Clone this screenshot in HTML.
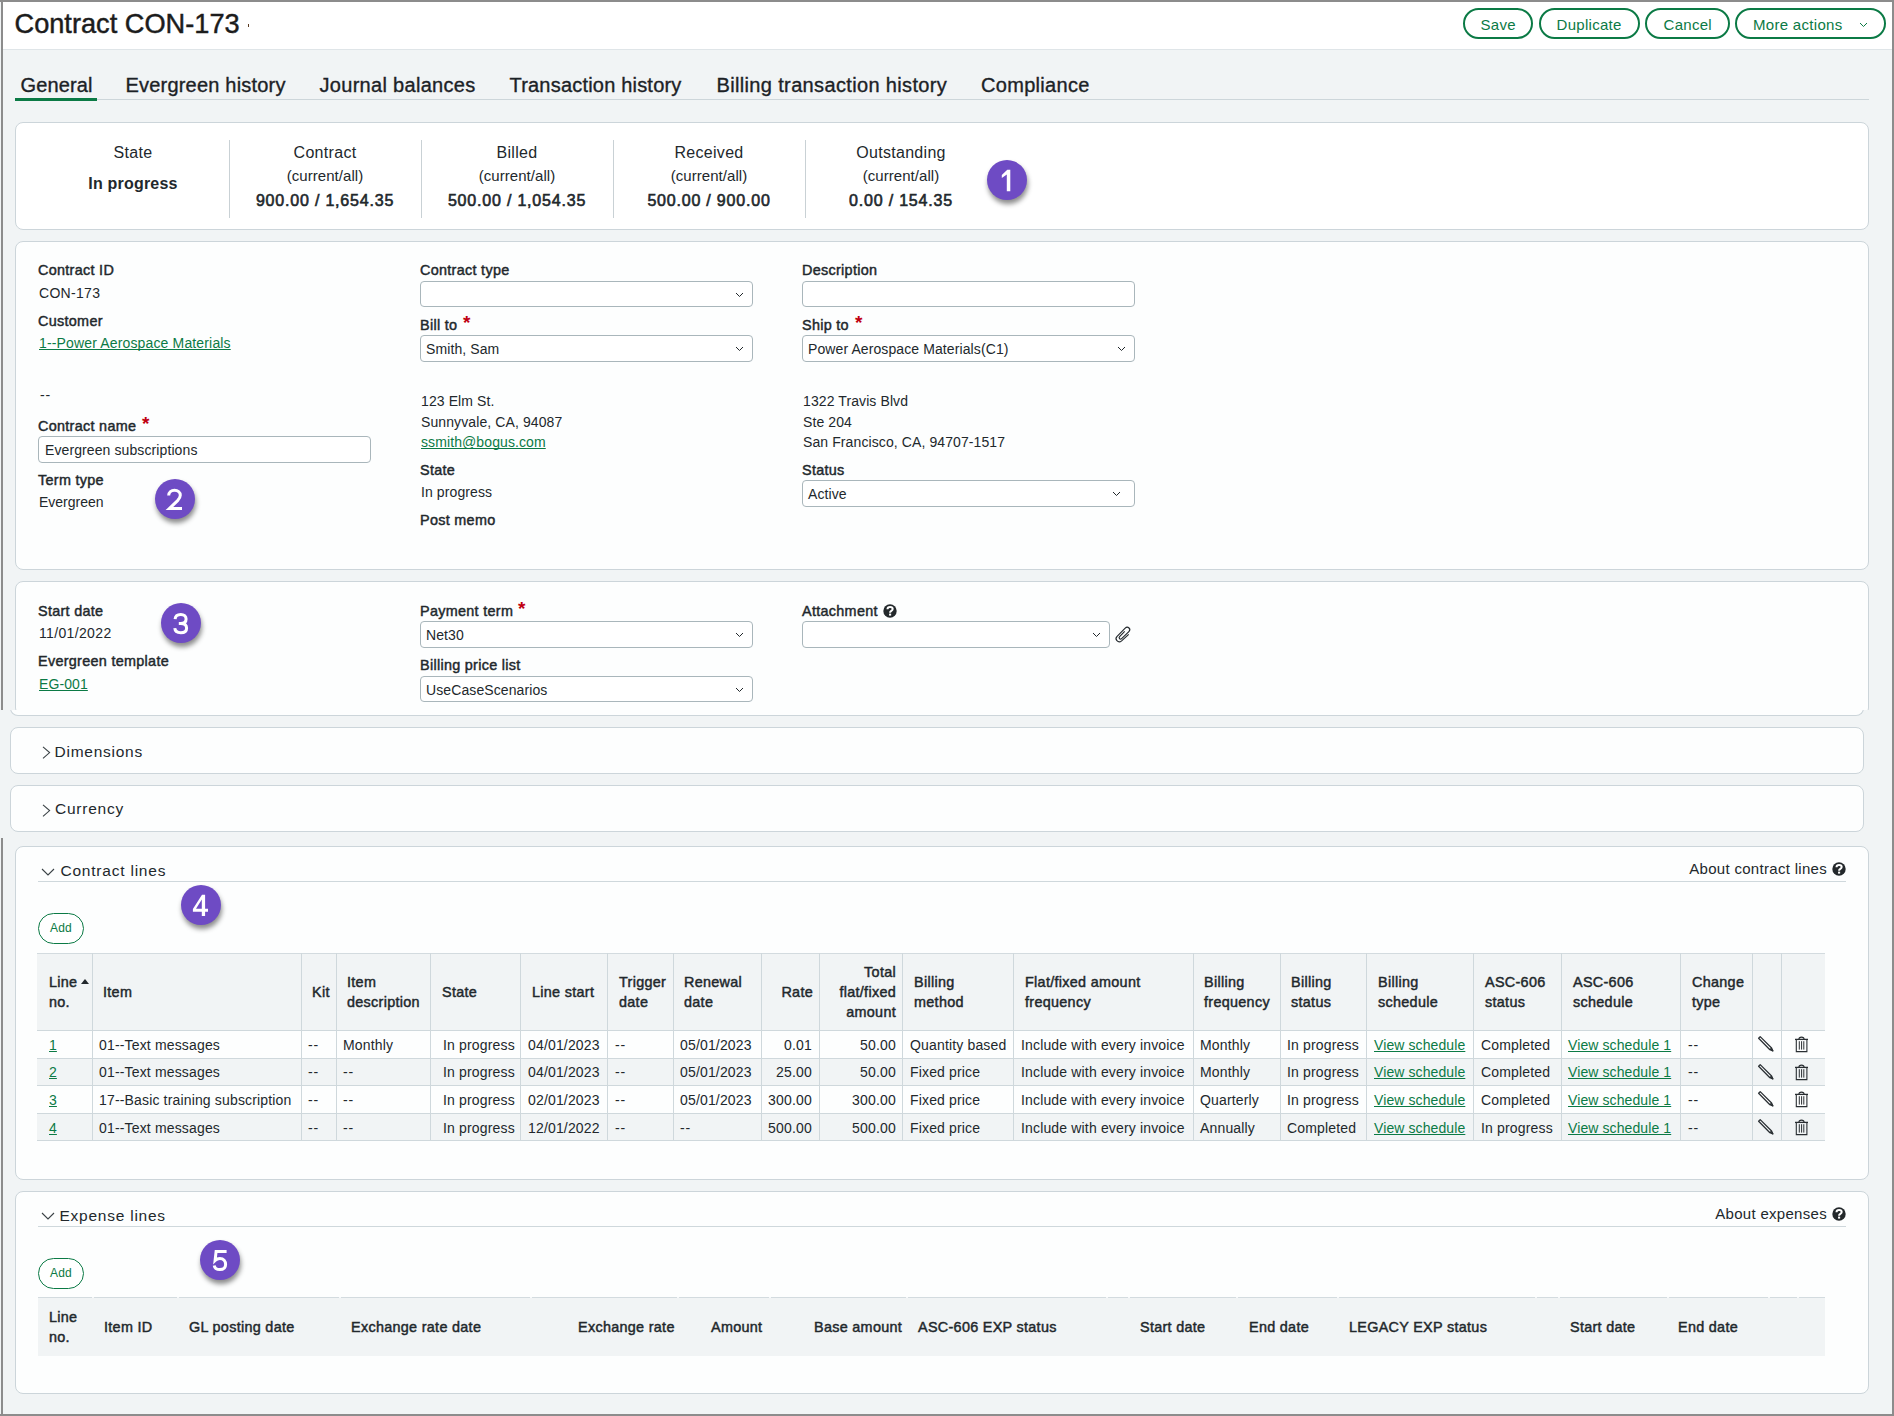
<!DOCTYPE html><html><head><meta charset="utf-8"><style>
html,body{margin:0;padding:0;}
body{width:1894px;height:1416px;position:relative;overflow:hidden;background:#f1f4f5;font-family:"Liberation Sans",sans-serif;color:#22282c;}
.t{position:absolute;white-space:nowrap;}
.b{position:absolute;}
.b svg{display:block;}
.circ{position:absolute;width:40px;height:40px;border-radius:50%;background:#6e4bc4;box-shadow:1px 4px 5px rgba(0,0,0,0.45);}
.circ svg{display:block;}
.btn{position:absolute;box-sizing:border-box;border:2px solid #0b7a45;border-radius:16px;color:#0b7a45;font-size:16px;background:#fff;}
</style></head><body>
<div class="b" style="left:0px;top:0px;width:1894px;height:2px;background:#8c8c8c"></div>
<div class="b" style="left:1px;top:0px;width:2px;height:710px;background:#8c8c8c"></div>
<div class="b" style="left:1px;top:838px;width:2px;height:578px;background:#8c8c8c"></div>
<div class="b" style="left:1892px;top:0px;width:2px;height:1416px;background:#8c8c8c"></div>
<div class="b" style="left:0px;top:1414px;width:1894px;height:2px;background:#8c8c8c"></div>
<div class="b" style="left:3px;top:2px;width:1889px;height:47px;background:#fff"></div>
<div class="b" style="left:3px;top:49px;width:1889px;height:1px;background:#dfe5e8"></div>
<div class="t " style="left:14.5px;top:10.38px;font-size:27.2px;line-height:27.2px;color:#1c1c1c;-webkit-text-stroke:0.45px #1c1c1c;">Contract CON-173</div>
<div class="b" style="left:248px;top:24px;width:1px;height:3px;background:#5a3a20"></div>
<div class="btn" style="left:1463px;top:8px;width:70px;height:31px;"></div>
<div class="t " style="left:1480.5px;top:17.30px;font-size:15px;line-height:15px;color:#0b7a45;letter-spacing:0.3px;">Save</div>
<div class="btn" style="left:1539px;top:8px;width:101px;height:31px;"></div>
<div class="t " style="left:1556.5px;top:17.30px;font-size:15px;line-height:15px;color:#0b7a45;letter-spacing:0.3px;">Duplicate</div>
<div class="btn" style="left:1645px;top:8px;width:85px;height:31px;"></div>
<div class="t " style="left:1663.5px;top:17.30px;font-size:15px;line-height:15px;color:#0b7a45;letter-spacing:0.3px;">Cancel</div>
<div class="btn" style="left:1735px;top:8px;width:151px;height:31px;"></div>
<div class="t " style="left:1753px;top:17.30px;font-size:15px;line-height:15px;color:#0b7a45;letter-spacing:0.3px;">More actions</div>
<div class="b" style="left:1859px;top:21.5px;width:9px;height:6px"><svg width="9" height="6" viewBox="0 0 9 6"><path d="M1 1 L4.5 4.5 L8 1" fill="none" stroke="#0b7a45" stroke-width="1"/></svg></div>
<div class="b" style="left:15px;top:99px;width:1854px;height:1px;background:#cdd6da"></div>
<div class="b" style="left:15px;top:98px;width:82px;height:3px;background:#0b7a45"></div>
<div class="t " style="left:20.5px;top:74.67px;font-size:20px;line-height:20px;color:#1c2226;letter-spacing:0.15px;-webkit-text-stroke:0.35px #1c2226;">General</div>
<div class="t " style="left:125.5px;top:74.67px;font-size:20px;line-height:20px;color:#1c2226;letter-spacing:0.2px;-webkit-text-stroke:0.35px #1c2226;">Evergreen history</div>
<div class="t " style="left:319.5px;top:74.67px;font-size:20px;line-height:20px;color:#1c2226;letter-spacing:0.3px;-webkit-text-stroke:0.35px #1c2226;">Journal balances</div>
<div class="t " style="left:509.5px;top:74.67px;font-size:20px;line-height:20px;color:#1c2226;letter-spacing:0.2px;-webkit-text-stroke:0.35px #1c2226;">Transaction history</div>
<div class="t " style="left:716.5px;top:74.67px;font-size:20px;line-height:20px;color:#1c2226;letter-spacing:0.35px;-webkit-text-stroke:0.35px #1c2226;">Billing transaction history</div>
<div class="t " style="left:981px;top:74.67px;font-size:20px;line-height:20px;color:#1c2226;letter-spacing:0.3px;-webkit-text-stroke:0.35px #1c2226;">Compliance</div>
<div class="b" style="left:15px;top:122px;width:1854px;height:108px;border:1px solid #ccd5da;border-radius:8px;background:#fff;box-sizing:border-box;"></div>
<div class="b" style="left:229px;top:140px;width:1px;height:78px;background:#c9d1d5"></div>
<div class="b" style="left:421px;top:140px;width:1px;height:78px;background:#c9d1d5"></div>
<div class="b" style="left:613px;top:140px;width:1px;height:78px;background:#c9d1d5"></div>
<div class="b" style="left:805px;top:140px;width:1px;height:78px;background:#c9d1d5"></div>
<div class="t " style="left:-167px;width:600px;text-align:center;top:145.46px;font-size:16px;line-height:16px;letter-spacing:0.3px;">State</div>
<div class="t " style="left:-167px;width:600px;text-align:center;top:176.46px;font-size:16px;line-height:16px;font-weight:bold;letter-spacing:0.2px;">In progress</div>
<div class="t " style="left:25px;width:600px;text-align:center;top:145.46px;font-size:16px;line-height:16px;letter-spacing:0.3px;">Contract</div>
<div class="t " style="left:25px;width:600px;text-align:center;top:168.30px;font-size:15px;line-height:15px;letter-spacing:0.05px;">(current/all)</div>
<div class="t " style="left:25px;width:600px;text-align:center;top:192.96px;font-size:16px;line-height:16px;letter-spacing:0.8px;-webkit-text-stroke:0.6px currentColor;">900.00 / 1,654.35</div>
<div class="t " style="left:217px;width:600px;text-align:center;top:145.46px;font-size:16px;line-height:16px;letter-spacing:0.3px;">Billed</div>
<div class="t " style="left:217px;width:600px;text-align:center;top:168.30px;font-size:15px;line-height:15px;letter-spacing:0.05px;">(current/all)</div>
<div class="t " style="left:217px;width:600px;text-align:center;top:192.96px;font-size:16px;line-height:16px;letter-spacing:0.8px;-webkit-text-stroke:0.6px currentColor;">500.00 / 1,054.35</div>
<div class="t " style="left:409px;width:600px;text-align:center;top:145.46px;font-size:16px;line-height:16px;letter-spacing:0.3px;">Received</div>
<div class="t " style="left:409px;width:600px;text-align:center;top:168.30px;font-size:15px;line-height:15px;letter-spacing:0.05px;">(current/all)</div>
<div class="t " style="left:409px;width:600px;text-align:center;top:192.96px;font-size:16px;line-height:16px;letter-spacing:0.8px;-webkit-text-stroke:0.6px currentColor;">500.00 / 900.00</div>
<div class="t " style="left:601px;width:600px;text-align:center;top:145.46px;font-size:16px;line-height:16px;letter-spacing:0.3px;">Outstanding</div>
<div class="t " style="left:601px;width:600px;text-align:center;top:168.30px;font-size:15px;line-height:15px;letter-spacing:0.05px;">(current/all)</div>
<div class="t " style="left:601px;width:600px;text-align:center;top:192.96px;font-size:16px;line-height:16px;letter-spacing:0.8px;-webkit-text-stroke:0.6px currentColor;">0.00 / 154.35</div>
<div class="circ" style="left:987px;top:160px;"><svg width="40" height="40" viewBox="0 0 40 40"><path d="M19.8 31.2 V14.6 L14.8 17.9 V15.0 L20.3 9.8 H23.3 V31.2 Z" fill="#fff"/></svg></div>
<div class="b" style="left:15px;top:241px;width:1854px;height:329px;border:1px solid #ccd5da;border-radius:8px;background:#fdfefe;box-sizing:border-box;"></div>
<div class="t " style="left:38px;top:263.15px;font-size:14.4px;line-height:14px;letter-spacing:0.3px;-webkit-text-stroke:0.45px currentColor;">Contract ID</div>
<div class="t " style="left:39px;top:286.15px;font-size:14px;line-height:14px;letter-spacing:0.3px;">CON-173</div>
<div class="t " style="left:38px;top:313.65px;font-size:14.4px;line-height:14px;letter-spacing:0.3px;-webkit-text-stroke:0.45px currentColor;">Customer</div>
<div class="t " style="left:39px;top:336.15px;font-size:14px;line-height:14px;color:#0b7a45;letter-spacing:0.15px;text-decoration:underline;text-underline-offset:1px;text-decoration-skip-ink:none;">1--Power Aerospace Materials</div>
<div class="t " style="left:40px;top:388.15px;font-size:14px;line-height:14px;letter-spacing:0.8px;">--</div>
<div class="t " style="left:38px;top:419.15px;font-size:14.4px;line-height:14px;letter-spacing:0.3px;-webkit-text-stroke:0.45px currentColor;">Contract name</div>
<div class="t" style="left:142px;top:414px;font-size:19px;line-height:19px;color:#c00010;font-weight:bold">*</div>
<div class="b" style="left:38px;top:436px;width:333px;height:27px;border:1px solid #a9b6bb;border-radius:4px;background:#fff;box-sizing:border-box;"></div>
<div class="t " style="left:45px;top:443.15px;font-size:14px;line-height:14px;letter-spacing:0.1px;">Evergreen subscriptions</div>
<div class="t " style="left:38px;top:473.15px;font-size:14.4px;line-height:14px;letter-spacing:0.3px;-webkit-text-stroke:0.45px currentColor;">Term type</div>
<div class="t " style="left:39px;top:495.15px;font-size:14px;line-height:14px;">Evergreen</div>
<div class="circ" style="left:155px;top:479px;"><svg width="40" height="40" viewBox="0 0 40 40"><path d="M13.7 16.6 C13.7 12.9 16.3 11.3 19.5 11.3 C22.8 11.3 25.3 13.3 25.3 16.3 C25.3 18.5 24.2 19.9 22.6 21.6 L14.3 29.6 H27" fill="none" stroke="#fff" stroke-width="3"/></svg></div>
<div class="t " style="left:420px;top:263.15px;font-size:14.4px;line-height:14px;letter-spacing:0.3px;-webkit-text-stroke:0.45px currentColor;">Contract type</div>
<div class="b" style="left:420px;top:281px;width:333px;height:26px;border:1px solid #a9b6bb;border-radius:4px;background:#fff;box-sizing:border-box;"></div>
<div class="b" style="left:735px;top:291.5px;width:9px;height:6px"><svg width="9" height="6" viewBox="0 0 9 6"><path d="M1 1 L4.5 4.5 L8 1" fill="none" stroke="#22282c" stroke-width="1"/></svg></div>
<div class="t " style="left:420px;top:318.15px;font-size:14.4px;line-height:14px;letter-spacing:0.3px;-webkit-text-stroke:0.45px currentColor;">Bill to</div>
<div class="t" style="left:463px;top:313px;font-size:19px;line-height:19px;color:#c00010;font-weight:bold">*</div>
<div class="b" style="left:420px;top:335px;width:333px;height:27px;border:1px solid #a9b6bb;border-radius:4px;background:#fff;box-sizing:border-box;"></div>
<div class="b" style="left:735px;top:346.0px;width:9px;height:6px"><svg width="9" height="6" viewBox="0 0 9 6"><path d="M1 1 L4.5 4.5 L8 1" fill="none" stroke="#22282c" stroke-width="1"/></svg></div>
<div class="t " style="left:426px;top:342.15px;font-size:14px;line-height:14px;letter-spacing:0.1px;">Smith, Sam</div>
<div class="t " style="left:421px;top:393.65px;font-size:14px;line-height:14px;letter-spacing:0.1px;">123 Elm St.</div>
<div class="t " style="left:421px;top:415.15px;font-size:14px;line-height:14px;letter-spacing:0.1px;">Sunnyvale, CA, 94087</div>
<div class="t " style="left:421px;top:434.65px;font-size:14px;line-height:14px;color:#0b7a45;letter-spacing:0.1px;text-decoration:underline;text-underline-offset:1px;text-decoration-skip-ink:none;">ssmith@bogus.com</div>
<div class="t " style="left:420px;top:462.65px;font-size:14.4px;line-height:14px;letter-spacing:0.3px;-webkit-text-stroke:0.45px currentColor;">State</div>
<div class="t " style="left:421px;top:485.15px;font-size:14px;line-height:14px;letter-spacing:0.1px;">In progress</div>
<div class="t " style="left:420px;top:513.15px;font-size:14.4px;line-height:14px;letter-spacing:0.3px;-webkit-text-stroke:0.45px currentColor;">Post memo</div>
<div class="t " style="left:802px;top:263.15px;font-size:14.4px;line-height:14px;letter-spacing:0.3px;-webkit-text-stroke:0.45px currentColor;">Description</div>
<div class="b" style="left:802px;top:281px;width:333px;height:26px;border:1px solid #a9b6bb;border-radius:4px;background:#fff;box-sizing:border-box;"></div>
<div class="t " style="left:802px;top:318.15px;font-size:14.4px;line-height:14px;letter-spacing:0.3px;-webkit-text-stroke:0.45px currentColor;">Ship to</div>
<div class="t" style="left:855px;top:313px;font-size:19px;line-height:19px;color:#c00010;font-weight:bold">*</div>
<div class="b" style="left:802px;top:335px;width:333px;height:27px;border:1px solid #a9b6bb;border-radius:4px;background:#fff;box-sizing:border-box;"></div>
<div class="b" style="left:1117px;top:346.0px;width:9px;height:6px"><svg width="9" height="6" viewBox="0 0 9 6"><path d="M1 1 L4.5 4.5 L8 1" fill="none" stroke="#22282c" stroke-width="1"/></svg></div>
<div class="t " style="left:808px;top:342.15px;font-size:14px;line-height:14px;letter-spacing:0.1px;">Power Aerospace Materials(C1)</div>
<div class="t " style="left:803px;top:393.65px;font-size:14px;line-height:14px;letter-spacing:0.1px;">1322 Travis Blvd</div>
<div class="t " style="left:803px;top:415.15px;font-size:14px;line-height:14px;letter-spacing:0.1px;">Ste 204</div>
<div class="t " style="left:803px;top:434.65px;font-size:14px;line-height:14px;letter-spacing:0.1px;">San Francisco, CA, 94707-1517</div>
<div class="t " style="left:802px;top:462.65px;font-size:14.4px;line-height:14px;letter-spacing:0.3px;-webkit-text-stroke:0.45px currentColor;">Status</div>
<div class="b" style="left:802px;top:480px;width:333px;height:27px;border:1px solid #a9b6bb;border-radius:4px;background:#fff;box-sizing:border-box;"></div>
<div class="b" style="left:1112px;top:491.0px;width:9px;height:6px"><svg width="9" height="6" viewBox="0 0 9 6"><path d="M1 1 L4.5 4.5 L8 1" fill="none" stroke="#22282c" stroke-width="1"/></svg></div>
<div class="t " style="left:808px;top:487.15px;font-size:14px;line-height:14px;letter-spacing:0.1px;">Active</div>
<div class="b" style="left:15px;top:581px;width:1854px;height:135px;border:1px solid #ccd5da;border-radius:8px;background:#fdfefe;box-sizing:border-box;"></div>
<div class="t " style="left:38px;top:604.15px;font-size:14.4px;line-height:14px;letter-spacing:0.3px;-webkit-text-stroke:0.45px currentColor;">Start date</div>
<div class="t " style="left:39px;top:626.15px;font-size:14px;line-height:14px;letter-spacing:0.35px;">11/01/2022</div>
<div class="t " style="left:38px;top:654.15px;font-size:14.4px;line-height:14px;letter-spacing:0.3px;-webkit-text-stroke:0.45px currentColor;">Evergreen template</div>
<div class="t " style="left:39px;top:677.15px;font-size:14px;line-height:14px;color:#0b7a45;letter-spacing:0.1px;text-decoration:underline;text-underline-offset:1px;text-decoration-skip-ink:none;">EG-001</div>
<div class="circ" style="left:161px;top:603px;"><svg width="40" height="40" viewBox="0 0 40 40"><path d="M14.1 16.2 C14.3 13 16.6 11.5 19.8 11.5 C23 11.5 25.1 13.3 25.1 16 C25.1 18.8 23 20.5 19.7 20.5 H17.8 M19.7 20.5 C23.3 20.5 25.6 22.3 25.6 25.2 C25.6 28.2 23.2 29.7 19.8 29.7 C16.5 29.7 14 28.2 13.8 25.2" fill="none" stroke="#fff" stroke-width="3"/></svg></div>
<div class="t " style="left:420px;top:604.15px;font-size:14.4px;line-height:14px;letter-spacing:0.3px;-webkit-text-stroke:0.45px currentColor;">Payment term</div>
<div class="t" style="left:518px;top:599px;font-size:19px;line-height:19px;color:#c00010;font-weight:bold">*</div>
<div class="b" style="left:420px;top:621px;width:333px;height:27px;border:1px solid #a9b6bb;border-radius:4px;background:#fff;box-sizing:border-box;"></div>
<div class="b" style="left:735px;top:632.0px;width:9px;height:6px"><svg width="9" height="6" viewBox="0 0 9 6"><path d="M1 1 L4.5 4.5 L8 1" fill="none" stroke="#22282c" stroke-width="1"/></svg></div>
<div class="t " style="left:426px;top:628.15px;font-size:14px;line-height:14px;letter-spacing:0.1px;">Net30</div>
<div class="t " style="left:420px;top:658.15px;font-size:14.4px;line-height:14px;letter-spacing:0.3px;-webkit-text-stroke:0.45px currentColor;">Billing price list</div>
<div class="b" style="left:420px;top:676px;width:333px;height:26px;border:1px solid #a9b6bb;border-radius:4px;background:#fff;box-sizing:border-box;"></div>
<div class="b" style="left:735px;top:686.5px;width:9px;height:6px"><svg width="9" height="6" viewBox="0 0 9 6"><path d="M1 1 L4.5 4.5 L8 1" fill="none" stroke="#22282c" stroke-width="1"/></svg></div>
<div class="t " style="left:426px;top:683.15px;font-size:14px;line-height:14px;letter-spacing:0.1px;">UseCaseScenarios</div>
<div class="t " style="left:802px;top:604.15px;font-size:14.4px;line-height:14px;letter-spacing:0.3px;-webkit-text-stroke:0.45px currentColor;">Attachment</div>
<div class="b" style="left:883px;top:604px;width:14px;height:14px"><svg width="14" height="14" viewBox="0 0 14 14"><circle cx="7" cy="7" r="6.7" fill="#23282b"/><path d="M4.5 5.3 C4.5 3.8 5.6 3 7.1 3 C8.6 3 9.7 3.8 9.7 5.1 C9.7 6.3 8.7 6.8 8 7.2 C7.4 7.6 7.1 7.9 7.1 8.7" stroke="#fff" stroke-width="2" fill="none"/><rect x="6.05" y="9.6" width="2.1" height="2" fill="#fff"/></svg></div>
<div class="b" style="left:802px;top:621px;width:308px;height:27px;border:1px solid #a9b6bb;border-radius:4px;background:#fff;box-sizing:border-box;"></div>
<div class="b" style="left:1092px;top:632.0px;width:9px;height:6px"><svg width="9" height="6" viewBox="0 0 9 6"><path d="M1 1 L4.5 4.5 L8 1" fill="none" stroke="#22282c" stroke-width="1"/></svg></div>
<div class="b" style="left:1113px;top:624px;width:20px;height:20px"><svg width="20" height="20" viewBox="0 0 20 20"><path d="M15.7 10.4 L8.6 16.9 C7.2 18.1 5.1 18 3.9 16.7 C2.8 15.5 2.9 13.6 4.1 12.4 L12.2 4.1 C13.3 3 15 3 16 4 C17 5 16.9 6.6 15.9 7.6 L8.6 14.6 C8 15.2 7 15.2 6.5 14.6 C6 14 6.1 13.1 6.6 12.6 L11.7 7.4" fill="none" stroke="#22282c" stroke-width="1.15"/></svg></div>
<div class="b" style="left:0px;top:710px;width:1892px;height:128px;background:#f1f4f5"></div>
<div class="b" style="left:10px;top:700px;width:1854px;height:16px;border:1px solid #ccd5da;border-top:none;border-radius:0 0 8px 8px;background:#fdfefe;box-sizing:border-box;clip-path:inset(10px 0 0 0)"></div>
<div class="b" style="left:10px;top:727px;width:1854px;height:47px;border:1px solid #ccd5da;border-radius:8px;background:#fdfefe;box-sizing:border-box;"></div>
<div class="b" style="left:42px;top:746px;width:9px;height:14px"><svg width="9" height="14" viewBox="0 0 9 14"><path d="M1 0.8 L7.6 6.6 L1 12.4" fill="none" stroke="#3a4246" stroke-width="1.1"/></svg></div>
<div class="t " style="left:54.5px;top:744.38px;font-size:15.5px;line-height:15.5px;letter-spacing:0.75px;">Dimensions</div>
<div class="b" style="left:10px;top:785px;width:1854px;height:47px;border:1px solid #ccd5da;border-radius:8px;background:#fdfefe;box-sizing:border-box;"></div>
<div class="b" style="left:42px;top:804px;width:9px;height:14px"><svg width="9" height="14" viewBox="0 0 9 14"><path d="M1 0.8 L7.6 6.6 L1 12.4" fill="none" stroke="#3a4246" stroke-width="1.1"/></svg></div>
<div class="t " style="left:55px;top:801.48px;font-size:15.5px;line-height:15.5px;letter-spacing:0.75px;">Currency</div>
<div class="b" style="left:15px;top:846px;width:1854px;height:334px;border:1px solid #ccd5da;border-radius:8px;background:#fdfefe;box-sizing:border-box;"></div>
<div class="b" style="left:41px;top:868px;width:14px;height:8px"><svg width="14" height="8" viewBox="0 0 14 8"><path d="M1 1 L7 7 L13 1" fill="none" stroke="#3a4246" stroke-width="1.1"/></svg></div>
<div class="t " style="left:60.5px;top:863.38px;font-size:15.5px;line-height:15.5px;letter-spacing:0.78px;">Contract lines</div>
<div class="b" style="left:38px;top:881px;width:1808px;height:1px;background:#cfd8dc"></div>
<div class="t " style="left:1227px;width:600px;text-align:right;top:861.30px;font-size:15px;line-height:15px;letter-spacing:0.3px;">About contract lines</div>
<div class="b" style="left:1832px;top:862px;width:14px;height:14px"><svg width="14" height="14" viewBox="0 0 14 14"><circle cx="7" cy="7" r="6.7" fill="#23282b"/><path d="M4.5 5.3 C4.5 3.8 5.6 3 7.1 3 C8.6 3 9.7 3.8 9.7 5.1 C9.7 6.3 8.7 6.8 8 7.2 C7.4 7.6 7.1 7.9 7.1 8.7" stroke="#fff" stroke-width="2" fill="none"/><rect x="6.05" y="9.6" width="2.1" height="2" fill="#fff"/></svg></div>
<div class="b" style="left:38px;top:913px;width:46px;height:31px;box-sizing:border-box;border:1px solid #0b7a45;border-radius:16px;background:#fff"></div>
<div class="t " style="left:50px;top:921.84px;font-size:12px;line-height:12px;color:#0b7a45;letter-spacing:0.2px;">Add</div>
<div class="circ" style="left:181px;top:885px;"><svg width="40" height="40" viewBox="0 0 40 40"><path fill-rule="evenodd" d="M20.8 31.1 V26.8 H11.9 V24.1 L21 9.8 H24.1 V23.7 H27 V26.8 H24.1 V31.1 Z M20.8 23.7 V14.4 L15 23.7 Z" fill="#fff"/></svg></div>
<div class="b" style="left:37px;top:953px;width:1788px;height:77px;background:#f1f4f5"></div>
<div class="b" style="left:37px;top:953px;width:1788px;height:1px;background:#d3dbdf"></div>
<div class="b" style="left:37px;top:1058px;width:1788px;height:27px;background:#f1f4f5"></div>
<div class="b" style="left:37px;top:1113px;width:1788px;height:27px;background:#f1f4f5"></div>
<div class="b" style="left:37px;top:1030px;width:1788px;height:1px;background:#cfd8dc"></div>
<div class="b" style="left:37px;top:1058px;width:1788px;height:1px;background:#cfd8dc"></div>
<div class="b" style="left:37px;top:1085px;width:1788px;height:1px;background:#cfd8dc"></div>
<div class="b" style="left:37px;top:1113px;width:1788px;height:1px;background:#cfd8dc"></div>
<div class="b" style="left:37px;top:1140px;width:1788px;height:1px;background:#cfd8dc"></div>
<div class="b" style="left:92px;top:953px;width:1px;height:187px;background:#cfd8dc"></div>
<div class="b" style="left:301px;top:953px;width:1px;height:187px;background:#cfd8dc"></div>
<div class="b" style="left:336px;top:953px;width:1px;height:187px;background:#cfd8dc"></div>
<div class="b" style="left:430px;top:953px;width:1px;height:187px;background:#cfd8dc"></div>
<div class="b" style="left:520px;top:953px;width:1px;height:187px;background:#cfd8dc"></div>
<div class="b" style="left:607px;top:953px;width:1px;height:187px;background:#cfd8dc"></div>
<div class="b" style="left:673px;top:953px;width:1px;height:187px;background:#cfd8dc"></div>
<div class="b" style="left:761px;top:953px;width:1px;height:187px;background:#cfd8dc"></div>
<div class="b" style="left:819px;top:953px;width:1px;height:187px;background:#cfd8dc"></div>
<div class="b" style="left:902px;top:953px;width:1px;height:187px;background:#cfd8dc"></div>
<div class="b" style="left:1013px;top:953px;width:1px;height:187px;background:#cfd8dc"></div>
<div class="b" style="left:1193px;top:953px;width:1px;height:187px;background:#cfd8dc"></div>
<div class="b" style="left:1280px;top:953px;width:1px;height:187px;background:#cfd8dc"></div>
<div class="b" style="left:1366px;top:953px;width:1px;height:187px;background:#cfd8dc"></div>
<div class="b" style="left:1473px;top:953px;width:1px;height:187px;background:#cfd8dc"></div>
<div class="b" style="left:1561px;top:953px;width:1px;height:187px;background:#cfd8dc"></div>
<div class="b" style="left:1680px;top:953px;width:1px;height:187px;background:#cfd8dc"></div>
<div class="b" style="left:1752px;top:953px;width:1px;height:187px;background:#cfd8dc"></div>
<div class="b" style="left:1781px;top:953px;width:1px;height:187px;background:#cfd8dc"></div>
<div class="t " style="left:49px;top:975.15px;font-size:14.4px;line-height:14px;letter-spacing:0.3px;-webkit-text-stroke:0.45px currentColor;">Line</div>
<div class="t " style="left:49px;top:995.15px;font-size:14.4px;line-height:14px;letter-spacing:0.3px;-webkit-text-stroke:0.45px currentColor;">no.</div>
<div class="b" style="left:81px;top:979px;width:0;height:0;border-left:4px solid transparent;border-right:4px solid transparent;border-bottom:5px solid #22282c"></div>
<div class="t " style="left:103px;top:985.15px;font-size:14.4px;line-height:14px;letter-spacing:0.3px;-webkit-text-stroke:0.45px currentColor;">Item</div>
<div class="t " style="left:312px;top:985.15px;font-size:14.4px;line-height:14px;letter-spacing:0.3px;-webkit-text-stroke:0.45px currentColor;">Kit</div>
<div class="t " style="left:347px;top:975.15px;font-size:14.4px;line-height:14px;letter-spacing:0.3px;-webkit-text-stroke:0.45px currentColor;">Item</div>
<div class="t " style="left:347px;top:995.15px;font-size:14.4px;line-height:14px;letter-spacing:0.3px;-webkit-text-stroke:0.45px currentColor;">description</div>
<div class="t " style="left:442px;top:985.15px;font-size:14.4px;line-height:14px;letter-spacing:0.3px;-webkit-text-stroke:0.45px currentColor;">State</div>
<div class="t " style="left:532px;top:985.15px;font-size:14.4px;line-height:14px;letter-spacing:0.3px;-webkit-text-stroke:0.45px currentColor;">Line start</div>
<div class="t " style="left:619px;top:975.15px;font-size:14.4px;line-height:14px;letter-spacing:0.3px;-webkit-text-stroke:0.45px currentColor;">Trigger</div>
<div class="t " style="left:619px;top:995.15px;font-size:14.4px;line-height:14px;letter-spacing:0.3px;-webkit-text-stroke:0.45px currentColor;">date</div>
<div class="t " style="left:684px;top:975.15px;font-size:14.4px;line-height:14px;letter-spacing:0.3px;-webkit-text-stroke:0.45px currentColor;">Renewal</div>
<div class="t " style="left:684px;top:995.15px;font-size:14.4px;line-height:14px;letter-spacing:0.3px;-webkit-text-stroke:0.45px currentColor;">date</div>
<div class="t " style="left:213px;width:600px;text-align:right;top:985.15px;font-size:14.4px;line-height:14px;letter-spacing:0.3px;-webkit-text-stroke:0.45px currentColor;">Rate</div>
<div class="t " style="left:296px;width:600px;text-align:right;top:965.15px;font-size:14.4px;line-height:14px;letter-spacing:0.3px;-webkit-text-stroke:0.45px currentColor;">Total</div>
<div class="t " style="left:296px;width:600px;text-align:right;top:985.15px;font-size:14.4px;line-height:14px;letter-spacing:0.3px;-webkit-text-stroke:0.45px currentColor;">flat/fixed</div>
<div class="t " style="left:296px;width:600px;text-align:right;top:1005.15px;font-size:14.4px;line-height:14px;letter-spacing:0.3px;-webkit-text-stroke:0.45px currentColor;">amount</div>
<div class="t " style="left:914px;top:975.15px;font-size:14.4px;line-height:14px;letter-spacing:0.3px;-webkit-text-stroke:0.45px currentColor;">Billing</div>
<div class="t " style="left:914px;top:995.15px;font-size:14.4px;line-height:14px;letter-spacing:0.3px;-webkit-text-stroke:0.45px currentColor;">method</div>
<div class="t " style="left:1025px;top:975.15px;font-size:14.4px;line-height:14px;letter-spacing:0.3px;-webkit-text-stroke:0.45px currentColor;">Flat/fixed amount</div>
<div class="t " style="left:1025px;top:995.15px;font-size:14.4px;line-height:14px;letter-spacing:0.3px;-webkit-text-stroke:0.45px currentColor;">frequency</div>
<div class="t " style="left:1204px;top:975.15px;font-size:14.4px;line-height:14px;letter-spacing:0.3px;-webkit-text-stroke:0.45px currentColor;">Billing</div>
<div class="t " style="left:1204px;top:995.15px;font-size:14.4px;line-height:14px;letter-spacing:0.3px;-webkit-text-stroke:0.45px currentColor;">frequency</div>
<div class="t " style="left:1291px;top:975.15px;font-size:14.4px;line-height:14px;letter-spacing:0.3px;-webkit-text-stroke:0.45px currentColor;">Billing</div>
<div class="t " style="left:1291px;top:995.15px;font-size:14.4px;line-height:14px;letter-spacing:0.3px;-webkit-text-stroke:0.45px currentColor;">status</div>
<div class="t " style="left:1378px;top:975.15px;font-size:14.4px;line-height:14px;letter-spacing:0.3px;-webkit-text-stroke:0.45px currentColor;">Billing</div>
<div class="t " style="left:1378px;top:995.15px;font-size:14.4px;line-height:14px;letter-spacing:0.3px;-webkit-text-stroke:0.45px currentColor;">schedule</div>
<div class="t " style="left:1485px;top:975.15px;font-size:14.4px;line-height:14px;letter-spacing:0.3px;-webkit-text-stroke:0.45px currentColor;">ASC-606</div>
<div class="t " style="left:1485px;top:995.15px;font-size:14.4px;line-height:14px;letter-spacing:0.3px;-webkit-text-stroke:0.45px currentColor;">status</div>
<div class="t " style="left:1573px;top:975.15px;font-size:14.4px;line-height:14px;letter-spacing:0.3px;-webkit-text-stroke:0.45px currentColor;">ASC-606</div>
<div class="t " style="left:1573px;top:995.15px;font-size:14.4px;line-height:14px;letter-spacing:0.3px;-webkit-text-stroke:0.45px currentColor;">schedule</div>
<div class="t " style="left:1692px;top:975.15px;font-size:14.4px;line-height:14px;letter-spacing:0.3px;-webkit-text-stroke:0.45px currentColor;">Change</div>
<div class="t " style="left:1692px;top:995.15px;font-size:14.4px;line-height:14px;letter-spacing:0.3px;-webkit-text-stroke:0.45px currentColor;">type</div>
<div class="t " style="left:49px;top:1038.15px;font-size:14px;line-height:14px;color:#0b7a45;letter-spacing:0.1px;text-decoration:underline;text-underline-offset:1px;text-decoration-skip-ink:none;">1</div>
<div class="t " style="left:99px;top:1038.15px;font-size:14px;line-height:14px;letter-spacing:0.16px;">01--Text messages</div>
<div class="t " style="left:308px;top:1038.15px;font-size:14px;line-height:14px;letter-spacing:0.9px;">--</div>
<div class="t " style="left:343px;top:1038.15px;font-size:14px;line-height:14px;letter-spacing:0.16px;">Monthly</div>
<div class="t " style="left:443px;top:1038.15px;font-size:14px;line-height:14px;letter-spacing:0.16px;">In progress</div>
<div class="t " style="left:528px;top:1038.15px;font-size:14px;line-height:14px;letter-spacing:0.16px;">04/01/2023</div>
<div class="t " style="left:615px;top:1038.15px;font-size:14px;line-height:14px;letter-spacing:0.9px;">--</div>
<div class="t " style="left:680px;top:1038.15px;font-size:14px;line-height:14px;letter-spacing:0.16px;">05/01/2023</div>
<div class="t " style="left:212px;width:600px;text-align:right;top:1038.15px;font-size:14px;line-height:14px;letter-spacing:0.2px;">0.01</div>
<div class="t " style="left:296px;width:600px;text-align:right;top:1038.15px;font-size:14px;line-height:14px;letter-spacing:0.2px;">50.00</div>
<div class="t " style="left:910px;top:1038.15px;font-size:14px;line-height:14px;letter-spacing:0.16px;">Quantity based</div>
<div class="t " style="left:1021px;top:1038.15px;font-size:14px;line-height:14px;letter-spacing:0.16px;">Include with every invoice</div>
<div class="t " style="left:1200px;top:1038.15px;font-size:14px;line-height:14px;letter-spacing:0.16px;">Monthly</div>
<div class="t " style="left:1287px;top:1038.15px;font-size:14px;line-height:14px;letter-spacing:0.16px;">In progress</div>
<div class="t " style="left:1374px;top:1038.15px;font-size:14px;line-height:14px;color:#0b7a45;letter-spacing:0.1px;text-decoration:underline;text-underline-offset:1px;text-decoration-skip-ink:none;">View schedule</div>
<div class="t " style="left:1481px;top:1038.15px;font-size:14px;line-height:14px;letter-spacing:0.16px;">Completed</div>
<div class="t " style="left:1568px;top:1038.15px;font-size:14px;line-height:14px;color:#0b7a45;letter-spacing:0.1px;text-decoration:underline;text-underline-offset:1px;text-decoration-skip-ink:none;">View schedule 1</div>
<div class="t " style="left:1688px;top:1038.15px;font-size:14px;line-height:14px;letter-spacing:0.9px;">--</div>
<div class="b" style="left:1757px;top:1035px;width:17px;height:17px"><svg width="17" height="17" viewBox="0 0 17 17"><path d="M1.6 3.2 L3.2 1.6 L14.6 13 L15.9 16 L12.9 14.7 Z M12.9 14.7 L14.6 13" fill="none" stroke="#2a2f33" stroke-width="1.25" stroke-linejoin="round"/><path d="M14.3 14.3 L15.9 16" stroke="#2a2f33" stroke-width="1.6"/></svg></div>
<div class="b" style="left:1794px;top:1036px;width:15px;height:17px"><svg width="15" height="17" viewBox="0 0 15 17"><path d="M1 3.4 H14" stroke="#2a2f33" stroke-width="1.3"/><path d="M4.9 3.2 C4.9 1.4 5.6 1.1 7.5 1.1 C9.4 1.1 10.1 1.4 10.1 3.2" fill="none" stroke="#2a2f33" stroke-width="1.1"/><path d="M2.3 3.4 V15.6 H12.9 V3.4" fill="none" stroke="#2a2f33" stroke-width="1.1"/><path d="M5.3 5.2 V13.6 M7.6 5.2 V13.6 M9.8 5.2 V13.6" stroke="#2a2f33" stroke-width="1"/></svg></div>
<div class="t " style="left:49px;top:1065.15px;font-size:14px;line-height:14px;color:#0b7a45;letter-spacing:0.1px;text-decoration:underline;text-underline-offset:1px;text-decoration-skip-ink:none;">2</div>
<div class="t " style="left:99px;top:1065.15px;font-size:14px;line-height:14px;letter-spacing:0.16px;">01--Text messages</div>
<div class="t " style="left:308px;top:1065.15px;font-size:14px;line-height:14px;letter-spacing:0.9px;">--</div>
<div class="t " style="left:343px;top:1065.15px;font-size:14px;line-height:14px;letter-spacing:0.9px;">--</div>
<div class="t " style="left:443px;top:1065.15px;font-size:14px;line-height:14px;letter-spacing:0.16px;">In progress</div>
<div class="t " style="left:528px;top:1065.15px;font-size:14px;line-height:14px;letter-spacing:0.16px;">04/01/2023</div>
<div class="t " style="left:615px;top:1065.15px;font-size:14px;line-height:14px;letter-spacing:0.9px;">--</div>
<div class="t " style="left:680px;top:1065.15px;font-size:14px;line-height:14px;letter-spacing:0.16px;">05/01/2023</div>
<div class="t " style="left:212px;width:600px;text-align:right;top:1065.15px;font-size:14px;line-height:14px;letter-spacing:0.2px;">25.00</div>
<div class="t " style="left:296px;width:600px;text-align:right;top:1065.15px;font-size:14px;line-height:14px;letter-spacing:0.2px;">50.00</div>
<div class="t " style="left:910px;top:1065.15px;font-size:14px;line-height:14px;letter-spacing:0.16px;">Fixed price</div>
<div class="t " style="left:1021px;top:1065.15px;font-size:14px;line-height:14px;letter-spacing:0.16px;">Include with every invoice</div>
<div class="t " style="left:1200px;top:1065.15px;font-size:14px;line-height:14px;letter-spacing:0.16px;">Monthly</div>
<div class="t " style="left:1287px;top:1065.15px;font-size:14px;line-height:14px;letter-spacing:0.16px;">In progress</div>
<div class="t " style="left:1374px;top:1065.15px;font-size:14px;line-height:14px;color:#0b7a45;letter-spacing:0.1px;text-decoration:underline;text-underline-offset:1px;text-decoration-skip-ink:none;">View schedule</div>
<div class="t " style="left:1481px;top:1065.15px;font-size:14px;line-height:14px;letter-spacing:0.16px;">Completed</div>
<div class="t " style="left:1568px;top:1065.15px;font-size:14px;line-height:14px;color:#0b7a45;letter-spacing:0.1px;text-decoration:underline;text-underline-offset:1px;text-decoration-skip-ink:none;">View schedule 1</div>
<div class="t " style="left:1688px;top:1065.15px;font-size:14px;line-height:14px;letter-spacing:0.9px;">--</div>
<div class="b" style="left:1757px;top:1063px;width:17px;height:17px"><svg width="17" height="17" viewBox="0 0 17 17"><path d="M1.6 3.2 L3.2 1.6 L14.6 13 L15.9 16 L12.9 14.7 Z M12.9 14.7 L14.6 13" fill="none" stroke="#2a2f33" stroke-width="1.25" stroke-linejoin="round"/><path d="M14.3 14.3 L15.9 16" stroke="#2a2f33" stroke-width="1.6"/></svg></div>
<div class="b" style="left:1794px;top:1064px;width:15px;height:17px"><svg width="15" height="17" viewBox="0 0 15 17"><path d="M1 3.4 H14" stroke="#2a2f33" stroke-width="1.3"/><path d="M4.9 3.2 C4.9 1.4 5.6 1.1 7.5 1.1 C9.4 1.1 10.1 1.4 10.1 3.2" fill="none" stroke="#2a2f33" stroke-width="1.1"/><path d="M2.3 3.4 V15.6 H12.9 V3.4" fill="none" stroke="#2a2f33" stroke-width="1.1"/><path d="M5.3 5.2 V13.6 M7.6 5.2 V13.6 M9.8 5.2 V13.6" stroke="#2a2f33" stroke-width="1"/></svg></div>
<div class="t " style="left:49px;top:1093.15px;font-size:14px;line-height:14px;color:#0b7a45;letter-spacing:0.1px;text-decoration:underline;text-underline-offset:1px;text-decoration-skip-ink:none;">3</div>
<div class="t " style="left:99px;top:1093.15px;font-size:14px;line-height:14px;letter-spacing:0.16px;">17--Basic training subscription</div>
<div class="t " style="left:308px;top:1093.15px;font-size:14px;line-height:14px;letter-spacing:0.9px;">--</div>
<div class="t " style="left:343px;top:1093.15px;font-size:14px;line-height:14px;letter-spacing:0.9px;">--</div>
<div class="t " style="left:443px;top:1093.15px;font-size:14px;line-height:14px;letter-spacing:0.16px;">In progress</div>
<div class="t " style="left:528px;top:1093.15px;font-size:14px;line-height:14px;letter-spacing:0.16px;">02/01/2023</div>
<div class="t " style="left:615px;top:1093.15px;font-size:14px;line-height:14px;letter-spacing:0.9px;">--</div>
<div class="t " style="left:680px;top:1093.15px;font-size:14px;line-height:14px;letter-spacing:0.16px;">05/01/2023</div>
<div class="t " style="left:212px;width:600px;text-align:right;top:1093.15px;font-size:14px;line-height:14px;letter-spacing:0.2px;">300.00</div>
<div class="t " style="left:296px;width:600px;text-align:right;top:1093.15px;font-size:14px;line-height:14px;letter-spacing:0.2px;">300.00</div>
<div class="t " style="left:910px;top:1093.15px;font-size:14px;line-height:14px;letter-spacing:0.16px;">Fixed price</div>
<div class="t " style="left:1021px;top:1093.15px;font-size:14px;line-height:14px;letter-spacing:0.16px;">Include with every invoice</div>
<div class="t " style="left:1200px;top:1093.15px;font-size:14px;line-height:14px;letter-spacing:0.16px;">Quarterly</div>
<div class="t " style="left:1287px;top:1093.15px;font-size:14px;line-height:14px;letter-spacing:0.16px;">In progress</div>
<div class="t " style="left:1374px;top:1093.15px;font-size:14px;line-height:14px;color:#0b7a45;letter-spacing:0.1px;text-decoration:underline;text-underline-offset:1px;text-decoration-skip-ink:none;">View schedule</div>
<div class="t " style="left:1481px;top:1093.15px;font-size:14px;line-height:14px;letter-spacing:0.16px;">Completed</div>
<div class="t " style="left:1568px;top:1093.15px;font-size:14px;line-height:14px;color:#0b7a45;letter-spacing:0.1px;text-decoration:underline;text-underline-offset:1px;text-decoration-skip-ink:none;">View schedule 1</div>
<div class="t " style="left:1688px;top:1093.15px;font-size:14px;line-height:14px;letter-spacing:0.9px;">--</div>
<div class="b" style="left:1757px;top:1090px;width:17px;height:17px"><svg width="17" height="17" viewBox="0 0 17 17"><path d="M1.6 3.2 L3.2 1.6 L14.6 13 L15.9 16 L12.9 14.7 Z M12.9 14.7 L14.6 13" fill="none" stroke="#2a2f33" stroke-width="1.25" stroke-linejoin="round"/><path d="M14.3 14.3 L15.9 16" stroke="#2a2f33" stroke-width="1.6"/></svg></div>
<div class="b" style="left:1794px;top:1091px;width:15px;height:17px"><svg width="15" height="17" viewBox="0 0 15 17"><path d="M1 3.4 H14" stroke="#2a2f33" stroke-width="1.3"/><path d="M4.9 3.2 C4.9 1.4 5.6 1.1 7.5 1.1 C9.4 1.1 10.1 1.4 10.1 3.2" fill="none" stroke="#2a2f33" stroke-width="1.1"/><path d="M2.3 3.4 V15.6 H12.9 V3.4" fill="none" stroke="#2a2f33" stroke-width="1.1"/><path d="M5.3 5.2 V13.6 M7.6 5.2 V13.6 M9.8 5.2 V13.6" stroke="#2a2f33" stroke-width="1"/></svg></div>
<div class="t " style="left:49px;top:1121.15px;font-size:14px;line-height:14px;color:#0b7a45;letter-spacing:0.1px;text-decoration:underline;text-underline-offset:1px;text-decoration-skip-ink:none;">4</div>
<div class="t " style="left:99px;top:1121.15px;font-size:14px;line-height:14px;letter-spacing:0.16px;">01--Text messages</div>
<div class="t " style="left:308px;top:1121.15px;font-size:14px;line-height:14px;letter-spacing:0.9px;">--</div>
<div class="t " style="left:343px;top:1121.15px;font-size:14px;line-height:14px;letter-spacing:0.9px;">--</div>
<div class="t " style="left:443px;top:1121.15px;font-size:14px;line-height:14px;letter-spacing:0.16px;">In progress</div>
<div class="t " style="left:528px;top:1121.15px;font-size:14px;line-height:14px;letter-spacing:0.16px;">12/01/2022</div>
<div class="t " style="left:615px;top:1121.15px;font-size:14px;line-height:14px;letter-spacing:0.9px;">--</div>
<div class="t " style="left:680px;top:1121.15px;font-size:14px;line-height:14px;letter-spacing:0.9px;">--</div>
<div class="t " style="left:212px;width:600px;text-align:right;top:1121.15px;font-size:14px;line-height:14px;letter-spacing:0.2px;">500.00</div>
<div class="t " style="left:296px;width:600px;text-align:right;top:1121.15px;font-size:14px;line-height:14px;letter-spacing:0.2px;">500.00</div>
<div class="t " style="left:910px;top:1121.15px;font-size:14px;line-height:14px;letter-spacing:0.16px;">Fixed price</div>
<div class="t " style="left:1021px;top:1121.15px;font-size:14px;line-height:14px;letter-spacing:0.16px;">Include with every invoice</div>
<div class="t " style="left:1200px;top:1121.15px;font-size:14px;line-height:14px;letter-spacing:0.16px;">Annually</div>
<div class="t " style="left:1287px;top:1121.15px;font-size:14px;line-height:14px;letter-spacing:0.16px;">Completed</div>
<div class="t " style="left:1374px;top:1121.15px;font-size:14px;line-height:14px;color:#0b7a45;letter-spacing:0.1px;text-decoration:underline;text-underline-offset:1px;text-decoration-skip-ink:none;">View schedule</div>
<div class="t " style="left:1481px;top:1121.15px;font-size:14px;line-height:14px;letter-spacing:0.16px;">In progress</div>
<div class="t " style="left:1568px;top:1121.15px;font-size:14px;line-height:14px;color:#0b7a45;letter-spacing:0.1px;text-decoration:underline;text-underline-offset:1px;text-decoration-skip-ink:none;">View schedule 1</div>
<div class="t " style="left:1688px;top:1121.15px;font-size:14px;line-height:14px;letter-spacing:0.9px;">--</div>
<div class="b" style="left:1757px;top:1118px;width:17px;height:17px"><svg width="17" height="17" viewBox="0 0 17 17"><path d="M1.6 3.2 L3.2 1.6 L14.6 13 L15.9 16 L12.9 14.7 Z M12.9 14.7 L14.6 13" fill="none" stroke="#2a2f33" stroke-width="1.25" stroke-linejoin="round"/><path d="M14.3 14.3 L15.9 16" stroke="#2a2f33" stroke-width="1.6"/></svg></div>
<div class="b" style="left:1794px;top:1119px;width:15px;height:17px"><svg width="15" height="17" viewBox="0 0 15 17"><path d="M1 3.4 H14" stroke="#2a2f33" stroke-width="1.3"/><path d="M4.9 3.2 C4.9 1.4 5.6 1.1 7.5 1.1 C9.4 1.1 10.1 1.4 10.1 3.2" fill="none" stroke="#2a2f33" stroke-width="1.1"/><path d="M2.3 3.4 V15.6 H12.9 V3.4" fill="none" stroke="#2a2f33" stroke-width="1.1"/><path d="M5.3 5.2 V13.6 M7.6 5.2 V13.6 M9.8 5.2 V13.6" stroke="#2a2f33" stroke-width="1"/></svg></div>
<div class="b" style="left:15px;top:1191px;width:1854px;height:203px;border:1px solid #ccd5da;border-radius:8px;background:#fdfefe;box-sizing:border-box;"></div>
<div class="b" style="left:41px;top:1212px;width:14px;height:8px"><svg width="14" height="8" viewBox="0 0 14 8"><path d="M1 1 L7 7 L13 1" fill="none" stroke="#3a4246" stroke-width="1.1"/></svg></div>
<div class="t " style="left:59.5px;top:1208.38px;font-size:15.5px;line-height:15.5px;letter-spacing:0.76px;">Expense lines</div>
<div class="b" style="left:38px;top:1226px;width:1808px;height:1px;background:#cfd8dc"></div>
<div class="t " style="left:1227px;width:600px;text-align:right;top:1206.30px;font-size:15px;line-height:15px;letter-spacing:0.3px;">About expenses</div>
<div class="b" style="left:1832px;top:1207px;width:14px;height:14px"><svg width="14" height="14" viewBox="0 0 14 14"><circle cx="7" cy="7" r="6.7" fill="#23282b"/><path d="M4.5 5.3 C4.5 3.8 5.6 3 7.1 3 C8.6 3 9.7 3.8 9.7 5.1 C9.7 6.3 8.7 6.8 8 7.2 C7.4 7.6 7.1 7.9 7.1 8.7" stroke="#fff" stroke-width="2" fill="none"/><rect x="6.05" y="9.6" width="2.1" height="2" fill="#fff"/></svg></div>
<div class="b" style="left:38px;top:1258px;width:46px;height:31px;box-sizing:border-box;border:1px solid #0b7a45;border-radius:16px;background:#fff"></div>
<div class="t " style="left:50px;top:1266.84px;font-size:12px;line-height:12px;color:#0b7a45;letter-spacing:0.2px;">Add</div>
<div class="circ" style="left:200px;top:1240px;"><svg width="40" height="40" viewBox="0 0 40 40"><path d="M26.6 11.4 H16.1 L15.1 20.4 C16.4 19.1 17.9 18.4 19.9 18.4 C23.6 18.4 25.6 21 25.6 24.5 C25.6 28.1 23.3 29.6 19.8 29.6 C16.9 29.6 14.7 28.3 14.2 25.4" fill="none" stroke="#fff" stroke-width="3"/></svg></div>
<div class="b" style="left:38px;top:1297px;width:1787px;height:59px;background:#f1f4f5"></div>
<div class="b" style="left:38px;top:1297px;width:1787px;height:1px;background:#d3dbdf"></div>
<div class="b" style="left:92px;top:1297px;width:2px;height:1px;background:#f6f8f9"></div>
<div class="b" style="left:177px;top:1297px;width:2px;height:1px;background:#f6f8f9"></div>
<div class="b" style="left:339px;top:1297px;width:2px;height:1px;background:#f6f8f9"></div>
<div class="b" style="left:530px;top:1297px;width:2px;height:1px;background:#f6f8f9"></div>
<div class="b" style="left:677px;top:1297px;width:2px;height:1px;background:#f6f8f9"></div>
<div class="b" style="left:769px;top:1297px;width:2px;height:1px;background:#f6f8f9"></div>
<div class="b" style="left:906px;top:1297px;width:2px;height:1px;background:#f6f8f9"></div>
<div class="b" style="left:1106px;top:1297px;width:2px;height:1px;background:#f6f8f9"></div>
<div class="b" style="left:1128px;top:1297px;width:2px;height:1px;background:#f6f8f9"></div>
<div class="b" style="left:1236px;top:1297px;width:2px;height:1px;background:#f6f8f9"></div>
<div class="b" style="left:1337px;top:1297px;width:2px;height:1px;background:#f6f8f9"></div>
<div class="b" style="left:1535px;top:1297px;width:2px;height:1px;background:#f6f8f9"></div>
<div class="b" style="left:1558px;top:1297px;width:2px;height:1px;background:#f6f8f9"></div>
<div class="b" style="left:1667px;top:1297px;width:2px;height:1px;background:#f6f8f9"></div>
<div class="b" style="left:1768px;top:1297px;width:2px;height:1px;background:#f6f8f9"></div>
<div class="b" style="left:1797px;top:1297px;width:2px;height:1px;background:#f6f8f9"></div>
<div class="t " style="left:49px;top:1310.15px;font-size:14.4px;line-height:14px;letter-spacing:0.3px;-webkit-text-stroke:0.45px currentColor;">Line</div>
<div class="t " style="left:49px;top:1330.15px;font-size:14.4px;line-height:14px;letter-spacing:0.3px;-webkit-text-stroke:0.45px currentColor;">no.</div>
<div class="t " style="left:104px;top:1320.15px;font-size:14.4px;line-height:14px;letter-spacing:0.3px;-webkit-text-stroke:0.45px currentColor;">Item ID</div>
<div class="t " style="left:189px;top:1320.15px;font-size:14.4px;line-height:14px;letter-spacing:0.3px;-webkit-text-stroke:0.45px currentColor;">GL posting date</div>
<div class="t " style="left:351px;top:1320.15px;font-size:14.4px;line-height:14px;letter-spacing:0.3px;-webkit-text-stroke:0.45px currentColor;">Exchange rate date</div>
<div class="t " style="left:578px;top:1320.15px;font-size:14.4px;line-height:14px;letter-spacing:0.3px;-webkit-text-stroke:0.45px currentColor;">Exchange rate</div>
<div class="t " style="left:711px;top:1320.15px;font-size:14.4px;line-height:14px;letter-spacing:0.3px;-webkit-text-stroke:0.45px currentColor;">Amount</div>
<div class="t " style="left:814px;top:1320.15px;font-size:14.4px;line-height:14px;letter-spacing:0.3px;-webkit-text-stroke:0.45px currentColor;">Base amount</div>
<div class="t " style="left:918px;top:1320.15px;font-size:14.4px;line-height:14px;letter-spacing:0.3px;-webkit-text-stroke:0.45px currentColor;">ASC-606 EXP status</div>
<div class="t " style="left:1140px;top:1320.15px;font-size:14.4px;line-height:14px;letter-spacing:0.3px;-webkit-text-stroke:0.45px currentColor;">Start date</div>
<div class="t " style="left:1249px;top:1320.15px;font-size:14.4px;line-height:14px;letter-spacing:0.3px;-webkit-text-stroke:0.45px currentColor;">End date</div>
<div class="t " style="left:1349px;top:1320.15px;font-size:14.4px;line-height:14px;letter-spacing:0.3px;-webkit-text-stroke:0.45px currentColor;">LEGACY EXP status</div>
<div class="t " style="left:1570px;top:1320.15px;font-size:14.4px;line-height:14px;letter-spacing:0.3px;-webkit-text-stroke:0.45px currentColor;">Start date</div>
<div class="t " style="left:1678px;top:1320.15px;font-size:14.4px;line-height:14px;letter-spacing:0.3px;-webkit-text-stroke:0.45px currentColor;">End date</div>
</body></html>
